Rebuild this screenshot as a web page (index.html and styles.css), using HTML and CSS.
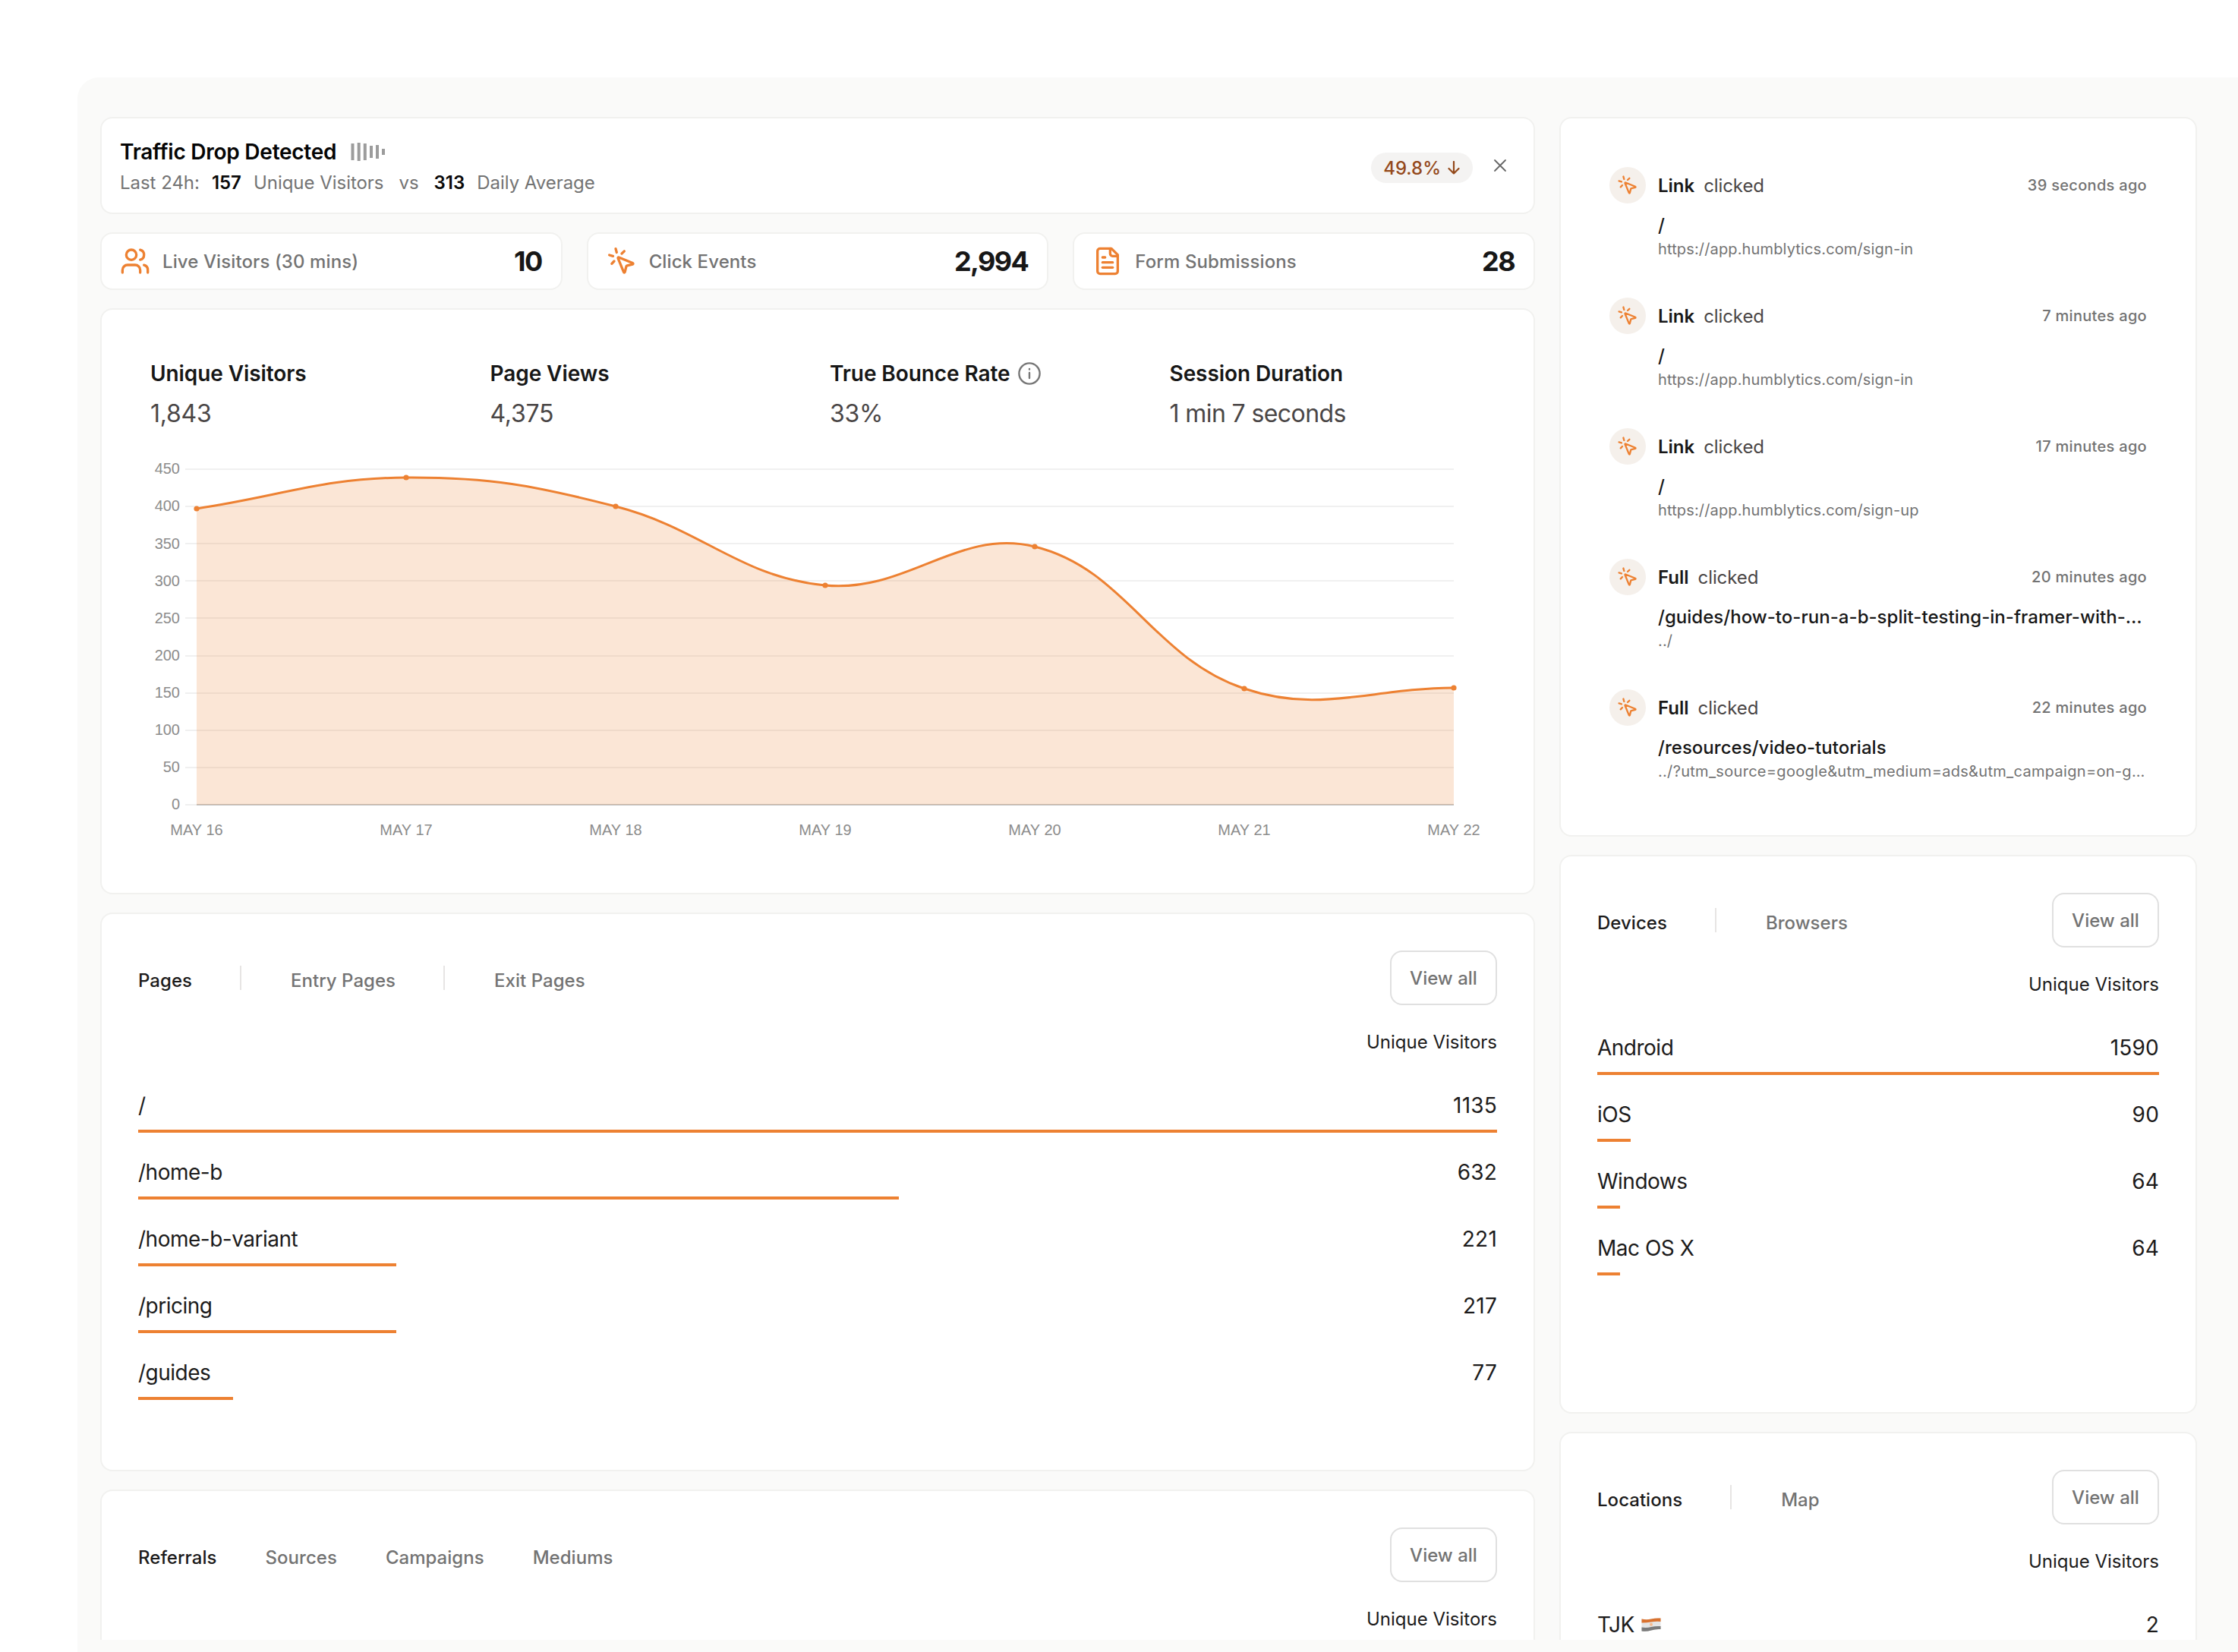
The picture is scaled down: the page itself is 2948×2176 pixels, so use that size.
FILE: index.html
```html
<!DOCTYPE html>
<html lang="en">
<head>
    <meta charset="UTF-8">
    <meta name="viewport" content="width=device-width, initial-scale=1.0">
    <title>Analytics Dashboard</title>
    <link rel="stylesheet" href="styles.css">
</head>
<body>
<svg class="sprite" aria-hidden="true">
    <symbol id="icon-click" viewBox="0 0 24 24">
        <path d="M14 4.1 12 6"/>
        <path d="m5.1 8-2.9-.8"/>
        <path d="m6 12-1.9 2"/>
        <path d="M7.2 2.2 8 5.1"/>
        <path d="M9.037 9.69a.498.498 0 0 1 .653-.653l11 4.5a.5.5 0 0 1-.074.949l-4.349 1.041a1 1 0 0 0-.74.739l-1.04 4.35a.5.5 0 0 1-.95.074z"/>
    </symbol>
</svg>

<div class="panel">
    <div class="board">
        <div class="column">
            <section class="card alert">
                <div>
                    <div class="alert-title">
                        <span>Traffic Drop Detected</span>
                        <svg class="bars-icon" width="46" height="24" viewBox="0 0 46 24">
                            <rect x="0.5" y="1" width="4" height="22"/>
                            <rect x="8.7" y="0" width="4" height="24"/>
                            <rect x="16.8" y="1" width="4" height="22"/>
                            <rect x="25" y="4" width="4" height="16"/>
                            <rect x="33" y="3" width="4" height="18"/>
                            <rect x="41" y="8" width="4" height="8"/>
                        </svg>
                    </div>
                    <div class="alert-text">
                        <span>Last 24h:</span>
                        <b>157</b>
                        <span>Unique Visitors</span>
                        <span class="vs">vs</span>
                        <b>313</b>
                        <span>Daily Average</span>
                    </div>
                </div>
                <div class="alert-side">
                    <span class="pill">49.8%
                        <svg width="16" height="18" viewBox="0 0 16 18"><path d="M8 1v15.5M1.5 10 8 16.5 14.5 10"/></svg>
                    </span>
                    <svg class="close" width="28" height="28" viewBox="0 0 28 28"><path d="m7 7 14 14M21 7 7 21"/></svg>
                </div>
            </section>

            <div class="stats">
                <section class="card stat">
                    <svg class="icon" viewBox="0 0 24 24">
                        <path d="M16 21v-2a4 4 0 0 0-4-4H6a4 4 0 0 0-4 4v2"/>
                        <circle cx="9" cy="7" r="4"/>
                        <path d="M22 21v-2a4 4 0 0 0-3-3.87"/>
                        <path d="M16 3.13a4 4 0 0 1 0 7.75"/>
                    </svg>
                    <span class="stat-label">Live Visitors (30 mins)</span>
                    <span class="stat-value">10</span>
                </section>
                <section class="card stat">
                    <svg class="icon"><use href="#icon-click"/></svg>
                    <span class="stat-label">Click Events</span>
                    <span class="stat-value">2,994</span>
                </section>
                <section class="card stat">
                    <svg class="icon" viewBox="0 0 24 24">
                        <path d="M15 2H6a2 2 0 0 0-2 2v16a2 2 0 0 0 2 2h12a2 2 0 0 0 2-2V7Z"/>
                        <path d="M14 2v4a2 2 0 0 0 2 2h4"/>
                        <path d="M10 9H8"/>
                        <path d="M16 13H8"/>
                        <path d="M16 17H8"/>
                    </svg>
                    <span class="stat-label">Form Submissions</span>
                    <span class="stat-value">28</span>
                </section>
            </div>

            <section class="card overview">
                <div class="metrics">
                    <div>
                        <h3>Unique Visitors</h3>
                        <p>1,843</p>
                    </div>
                    <div>
                        <h3>Page Views</h3>
                        <p>4,375</p>
                    </div>
                    <div>
                        <h3>True Bounce Rate
                            <svg class="info" width="30" height="30" viewBox="0 0 30 30">
                                <circle cx="15" cy="15" r="13.6"/>
                                <path d="M15 14v7M15 9v.6"/>
                            </svg>
                        </h3>
                        <p>33%</p>
                    </div>
                    <div>
                        <h3>Session Duration</h3>
                        <p class="long">1 min 7 seconds</p>
                    </div>
                </div>
                <svg class="chart" width="1790" height="520" viewBox="198 590 1790 520">
                    <g class="grid">
                        <path d="M244 618H1915M244 667H1915M244 716H1915M244 765H1915M244 814H1915M244 864H1915M244 913H1915M244 962H1915M244 1011H1915M244 1060H1915"/>
                    </g>
                    <path class="axis" d="M259 1060H1915"/>
                    <path class="area" d="M259 670C369.4 653.6 424.6 629.6 535 629C645.4 628.4 704 639.5 811 667C924.7 696.3 974 760.1 1087 771C1194.6 781.3 1262 695.1 1363 720C1482.8 749.5 1518.1 866.3 1639 907C1738.9 940.7 1804.6 906.4 1915 906V1060H259Z"/>
                    <path class="line" d="M259 670C369.4 653.6 424.6 629.6 535 629C645.4 628.4 704 639.5 811 667C924.7 696.3 974 760.1 1087 771C1194.6 781.3 1262 695.1 1363 720C1482.8 749.5 1518.1 866.3 1639 907C1738.9 940.7 1804.6 906.4 1915 906"/>
                    <g class="points">
                        <circle cx="259" cy="670" r="3.6"/>
                        <circle cx="535" cy="629" r="3.6"/>
                        <circle cx="811" cy="667" r="3.6"/>
                        <circle cx="1087" cy="771" r="3.6"/>
                        <circle cx="1363" cy="720" r="3.6"/>
                        <circle cx="1639" cy="907" r="3.6"/>
                        <circle cx="1915" cy="906" r="3.6"/>
                    </g>
                    <g class="y-labels">
                        <text x="237" y="624">450</text>
                        <text x="237" y="673">400</text>
                        <text x="237" y="723">350</text>
                        <text x="237" y="772">300</text>
                        <text x="237" y="821">250</text>
                        <text x="237" y="870">200</text>
                        <text x="237" y="919">150</text>
                        <text x="237" y="968">100</text>
                        <text x="237" y="1017">50</text>
                        <text x="237" y="1066">0</text>
                    </g>
                    <g class="x-labels">
                        <text x="259" y="1099.5">MAY 16</text>
                        <text x="535" y="1099.5">MAY 17</text>
                        <text x="811" y="1099.5">MAY 18</text>
                        <text x="1087" y="1099.5">MAY 19</text>
                        <text x="1363" y="1099.5">MAY 20</text>
                        <text x="1639" y="1099.5">MAY 21</text>
                        <text x="1915" y="1099.5">MAY 22</text>
                    </g>
                </svg>
            </section>

            <section class="card table">
                <div class="table-head">
                    <div class="tabs">
                        <span class="tab active">Pages</span>
                        <i class="divider"></i>
                        <span class="tab">Entry Pages</span>
                        <i class="divider"></i>
                        <span class="tab">Exit Pages</span>
                    </div>
                    <button class="view-all">View all</button>
                </div>
                <div class="col-title">Unique Visitors</div>
                <div class="rows">
                    <div class="row"><span>/</span><span class="count">1135</span><div class="bar" style="width: 100%"></div></div>
                    <div class="row"><span>/home-b</span><span class="count">632</span><div class="bar" style="width: 56%"></div></div>
                    <div class="row"><span>/home-b-variant</span><span class="count">221</span><div class="bar" style="width: 19%"></div></div>
                    <div class="row"><span>/pricing</span><span class="count">217</span><div class="bar" style="width: 19%"></div></div>
                    <div class="row"><span>/guides</span><span class="count">77</span><div class="bar" style="width: 7%"></div></div>
                </div>
            </section>

            <section class="card table">
                <div class="table-head">
                    <div class="tabs">
                        <span class="tab active">Referrals</span>
                        <span class="tab">Sources</span>
                        <span class="tab">Campaigns</span>
                        <span class="tab">Mediums</span>
                    </div>
                    <button class="view-all">View all</button>
                </div>
                <div class="col-title">Unique Visitors</div>
            </section>
        </div>

        <div class="column">
            <section class="card feed">
                <div class="event">
                    <span class="event-icon"><svg><use href="#icon-click"/></svg></span>
                    <div class="event-body">
                        <div class="event-head"><b>Link</b><span>clicked</span><time>39 seconds ago</time></div>
                        <div class="event-path">/</div>
                        <div class="event-url">https://app.humblytics.com/sign-in</div>
                    </div>
                </div>
                <div class="event">
                    <span class="event-icon"><svg><use href="#icon-click"/></svg></span>
                    <div class="event-body">
                        <div class="event-head"><b>Link</b><span>clicked</span><time>7 minutes ago</time></div>
                        <div class="event-path">/</div>
                        <div class="event-url">https://app.humblytics.com/sign-in</div>
                    </div>
                </div>
                <div class="event">
                    <span class="event-icon"><svg><use href="#icon-click"/></svg></span>
                    <div class="event-body">
                        <div class="event-head"><b>Link</b><span>clicked</span><time>17 minutes ago</time></div>
                        <div class="event-path">/</div>
                        <div class="event-url">https://app.humblytics.com/sign-up</div>
                    </div>
                </div>
                <div class="event">
                    <span class="event-icon"><svg><use href="#icon-click"/></svg></span>
                    <div class="event-body">
                        <div class="event-head"><b>Full</b><span>clicked</span><time>20 minutes ago</time></div>
                        <div class="event-path">/guides/how-to-run-a-b-split-testing-in-framer-with-…</div>
                        <div class="event-url">../</div>
                    </div>
                </div>
                <div class="event">
                    <span class="event-icon"><svg><use href="#icon-click"/></svg></span>
                    <div class="event-body">
                        <div class="event-head"><b>Full</b><span>clicked</span><time>22 minutes ago</time></div>
                        <div class="event-path">/resources/video-tutorials</div>
                        <div class="event-url wide">../?utm_source=google&amp;utm_medium=ads&amp;utm_campaign=on-g…</div>
                    </div>
                </div>
            </section>

            <section class="card table">
                <div class="table-head">
                    <div class="tabs">
                        <span class="tab active">Devices</span>
                        <i class="divider"></i>
                        <span class="tab">Browsers</span>
                    </div>
                    <button class="view-all">View all</button>
                </div>
                <div class="col-title">Unique Visitors</div>
                <div class="rows">
                    <div class="row"><span>Android</span><span class="count">1590</span><div class="bar" style="width: 100%"></div></div>
                    <div class="row"><span>iOS</span><span class="count">90</span><div class="bar" style="width: 6%"></div></div>
                    <div class="row"><span>Windows</span><span class="count">64</span><div class="bar" style="width: 4%"></div></div>
                    <div class="row"><span>Mac OS X</span><span class="count">64</span><div class="bar" style="width: 4%"></div></div>
                </div>
            </section>

            <section class="card table">
                <div class="table-head">
                    <div class="tabs">
                        <span class="tab active">Locations</span>
                        <i class="divider"></i>
                        <span class="tab">Map</span>
                    </div>
                    <button class="view-all">View all</button>
                </div>
                <div class="col-title">Unique Visitors</div>
                <div class="rows">
                    <div class="row">
                        <span>TJK
                            <svg class="flag" width="26" height="20" viewBox="0 0 26 20">
                                <path fill="#e4e4e4" d="M.5 2.500Q7 4 13 2.500T25.500 1.500V16Q19 15.500 13 17.500T.5 18.500Z"/>
                                <path fill="#d9722f" d="M.5 2.500Q7 4 13 2.500T25.500 1.500V6Q19 5.500 13 6.500T.5 7.500Z"/>
                                <path fill="#7a7a7a" d="M.5 13.500Q7 14.500 13 13T25.500 12V16Q19 15.500 13 17.500T.5 18.500Z"/>
                                <circle fill="#f4b98c" cx="13" cy="9.800" r="2"/>
                            </svg>
                        </span>
                        <span class="count">2</span>
                        <div class="bar" style="width: 100%"></div>
                    </div>
                </div>
            </section>
        </div>
    </div>
</div>
</body>
</html>
```

FILE: styles.css
```css
* {
    box-sizing: border-box;
}

body {
    margin: 0;
    background: #fff;
    color: #1c1b1b;
    font-family: Inter, "Liberation Sans", sans-serif;
    font-size: 24px;
    overflow: hidden;
}

h3, p {
    margin: 0;
}

.sprite {
    display: none;
}

.panel {
    height: 2074px;
    margin: 102px 0 0 102px;
    padding: 52px 54px 16px 30px;
    background: #fafaf9;
    border-top-left-radius: 28px;
}

.board {
    display: grid;
    grid-template-columns: 1890px 840px;
    gap: 32px;
    height: 2006px;
    overflow: hidden;
}

.column {
    display: flex;
    flex-direction: column;
    gap: 24px;
}

.card {
    flex: none;
    background: #fff;
    border: 2px solid #f1f1ef;
    border-radius: 16px;
}

/* traffic alert */
.alert {
    display: flex;
    justify-content: space-between;
    height: 128px;
    padding: 26px 24px 0;
}

.alert-title {
    display: flex;
    align-items: center;
    gap: 19px;
    color: #050505;
    font-size: 28px;
    font-weight: 600;
    letter-spacing: -0.25px;
    line-height: 36px;
}

.bars-icon {
    fill: #9c9c9c;
}

.alert-text {
    display: flex;
    gap: 16px;
    margin-top: 5px;
    color: #737373;
    letter-spacing: -0.03px;
    line-height: 36px;
}

.alert-text b {
    color: #0a0a0a;
    font-weight: 600;
}

.alert-text .vs {
    margin: 0 4px;
}

.alert-side {
    display: flex;
    align-items: flex-start;
    gap: 22px;
    padding-right: 6px;
}

.pill {
    display: flex;
    align-items: center;
    gap: 9px;
    height: 40px;
    margin-top: 19px;
    padding: 0 17px 0 16px;
    border-radius: 20px;
    background: #f4f3f2;
    color: #94491b;
    font-weight: 500;
}

.pill svg, .close {
    fill: none;
    stroke: currentColor;
    stroke-width: 2.2;
    stroke-linecap: round;
    stroke-linejoin: round;
}

.close {
    margin-top: 22px;
    color: #666;
    stroke-width: 1.8;
}

/* small counters */
.stats {
    display: grid;
    grid-template-columns: repeat(3, 1fr);
    gap: 32px;
}

.stat {
    display: flex;
    align-items: center;
    height: 76px;
    padding: 0 24px;
}

.icon, .event-icon svg {
    width: 40px;
    height: 40px;
    fill: none;
    stroke: #ed8132;
    stroke-width: 2;
    stroke-linecap: round;
    stroke-linejoin: round;
}

.stat-label {
    margin-left: 16px;
    color: #737373;
    font-weight: 500;
    letter-spacing: 0.1px;
}

.stat-value {
    margin-left: auto;
    padding-right: 1px;
    color: #171717;
    font-size: 36px;
    font-weight: 700;
    letter-spacing: -1.6px;
}

/* overview chart */
.overview {
    height: 772px;
    padding: 64px 0 0 64px;
}

.metrics {
    display: grid;
    grid-template-columns: repeat(4, 447.5px);
}

.metrics h3 {
    display: flex;
    align-items: center;
    gap: 10px;
    color: #171717;
    font-size: 28px;
    font-weight: 600;
    letter-spacing: -0.08px;
    line-height: 40px;
}

.metrics p {
    margin-top: 11px;
    color: #4a4646;
    font-size: 32px;
    letter-spacing: -0.25px;
    line-height: 44px;
}

.metrics .long {
    letter-spacing: -0.6px;
}

.info {
    fill: none;
    stroke: #777;
    stroke-width: 2.4;
    stroke-linecap: round;
}

.chart {
    display: block;
    margin-top: 23px;
    font-family: "Liberation Sans", Arial, sans-serif;
    font-size: 20px;
}

.chart .grid {
    stroke: #f0f0f0;
    stroke-width: 2;
}

.chart .axis {
    stroke: #c4c4c4;
    stroke-width: 2;
}

.chart .area {
    fill: #ed8132;
    fill-opacity: 0.2;
}

.chart .line {
    fill: none;
    stroke: #ed8132;
    stroke-width: 3;
}

.chart .points {
    fill: #ed8132;
}

.chart text {
    fill: #8c8c8c;
}

.y-labels {
    text-anchor: end;
}

.x-labels {
    text-anchor: middle;
}

/* tables */
.table {
    height: 736px;
    padding: 48px;
}

.table-head {
    display: flex;
    justify-content: space-between;
    align-items: center;
    height: 72px;
}

.tabs {
    display: flex;
    align-items: center;
    gap: 64px;
}

.tab {
    padding-top: 6px;
    color: #737373;
    font-weight: 500;
    letter-spacing: 0.03px;
}

.tab.active {
    color: #1c1b1b;
}

.divider {
    width: 2px;
    height: 32px;
    margin: 0 1px 0 -1px;
    background: #e7e5e4;
}

.view-all {
    width: 141px;
    height: 72px;
    padding: 0;
    border: 2px solid #e0e0e0;
    border-radius: 16px;
    background: #fff;
    color: #737373;
    font: 500 24px Inter, "Liberation Sans", sans-serif;
}

.col-title {
    margin-top: 33px;
    line-height: 32px;
    text-align: right;
}

.rows {
    display: flex;
    flex-direction: column;
    gap: 32px;
    margin-top: 47px;
}

.row {
    display: grid;
    grid-template-columns: 1fr auto;
    row-gap: 12px;
    font-size: 28px;
    letter-spacing: -0.5px;
    line-height: 40px;
}

.count {
    letter-spacing: 0.2px;
}

.bar {
    grid-column: 1 / -1;
    height: 4px;
    background: #ed8132;
}

.flag {
    margin-left: 2px;
}

/* event feed */
.feed {
    display: flex;
    flex-direction: column;
    gap: 52px;
    height: 948px;
    padding: 64px;
}

.event {
    display: flex;
    gap: 16px;
    height: 120px;
}

.event-icon {
    display: flex;
    align-items: center;
    justify-content: center;
    width: 48px;
    height: 48px;
    border-radius: 50%;
    background: #f5f0eb;
}

.event-icon svg {
    width: 28px;
    height: 28px;
}

.event-body {
    flex: 1;
    white-space: nowrap;
}

.event-head {
    display: flex;
    align-items: center;
    height: 48px;
}

.event-head b, .event-path {
    color: #171717;
    font-weight: 500;
}

.event-head b {
    font-weight: 600;
}

.event-head span {
    margin-left: 12px;
    color: #4a4646;
    letter-spacing: -0.1px;
}

.event-head time {
    margin-left: auto;
    color: #737373;
    font-size: 20px;
    font-weight: 500;
    letter-spacing: 0.3px;
}

.event-path {
    margin-top: 13px;
    letter-spacing: 0.03px;
    line-height: 32px;
}

.event-url {
    margin-top: 1px;
    color: #737373;
    font-size: 20px;
    letter-spacing: 0.14px;
    line-height: 28px;
}

.event-url.wide {
    letter-spacing: 0.3px;
}
```
